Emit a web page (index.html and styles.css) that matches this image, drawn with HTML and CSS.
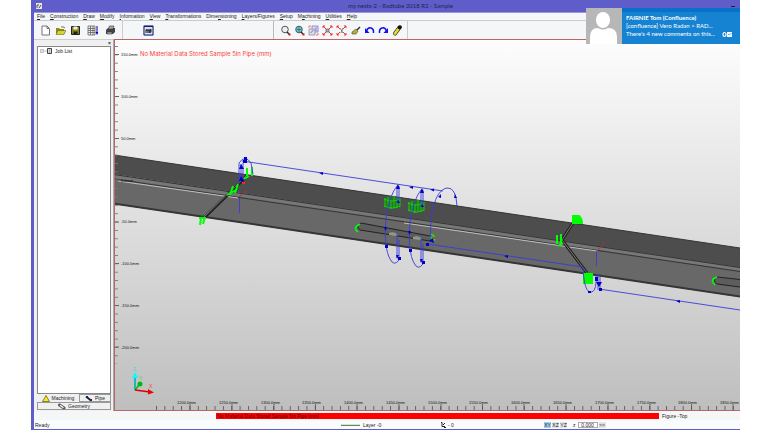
FILE: index.html
```html
<!DOCTYPE html>
<html lang="en">
<head>
<meta charset="utf-8">
<title>my nests-2 - Radtube 2018 R2 - Sample</title>
<link rel="stylesheet" href="styles.css">
</head>
<body>
<div class="app">
  <header class="titlebar">
    <svg class="app-icon" viewBox="0 0 6 6"><rect width="6" height="6" fill="#e8e8dc"/><path d="M1 5V2h2M3 5l2-3" stroke="#555" fill="none"/></svg>
    <span class="title">my nests-2 - Radtube 2018 R2 - Sample</span>
    <button class="minimize" aria-label="Minimize"></button>
  </header>
  <nav class="menu">
    <button><u>F</u>ile</button><button><u>C</u>onstruction</button><button><u>D</u>raw</button><button><u>M</u>odify</button><button><u>I</u>nformation</button><button><u>V</u>iew</button><button><u>T</u>ransformations</button><button>Dime<u>n</u>sioning</button><button><u>L</u>ayers/Figures</button><button><u>S</u>etup</button><button>M<u>a</u>chining</button><button><u>U</u>tilities</button><button><u>H</u>elp</button>
  </nav>
  <div class="toolbar">
    <div class="tools files">
      <button aria-label="New"><svg viewBox="0 0 11 11"><path d="M2 1h5l2.500 2.500V10H2zM7 1v2.500h2" fill="#fff" stroke="#555" stroke-width=".8"/></svg></button>
      <button aria-label="Open"><svg viewBox="0 0 11 11"><path d="M1 9V3h3l1 1h4v5z" fill="#8d8a18"/><path d="M1 9.500l2-4h8l-2 4z" fill="#d8d22a" stroke="#55551a" stroke-width=".5"/><path d="M6 2q2-1 4 1" stroke="#333" fill="none" stroke-width=".7"/></svg></button>
      <button aria-label="Save"><svg viewBox="0 0 11 11"><path d="M1.500 1.500h8v8h-8z" fill="#858719" stroke="#222"/><path d="M3.500 1.500h4v3h-4z" fill="#eee"/><path d="M3.500 6.500h4v3h-4z" fill="#222"/></svg></button>
    </div>
    <div class="tools output">
      <button aria-label="Report"><svg viewBox="0 0 11 11"><path d="M1 1h7v9H1zM1 3.500h7M1 5.500h7M1 7.500h7M3.500 1v9M6 1v9" fill="#eee" stroke="#555" stroke-width=".7"/><path d="M10 1v7" stroke="#00c"/><path d="M8.500 7h3L10 10z" fill="#00c"/></svg></button>
      <button aria-label="Print"><svg viewBox="0 0 11 11"><path d="M1 5l2-2h7v4L8 9H1z" fill="#444"/><path d="M3 4l1.500-3H9L8 4zM2 7h5v2H2z" fill="#aaa" stroke="#333" stroke-width=".6"/></svg></button>
    </div>
    <div class="tools preview">
      <button class="pressed" aria-label="Print preview"><svg viewBox="0 0 11 11"><path d="M1 1h9v9H1z" fill="#d9e2f4" stroke="#0d1e69"/><path d="M1 1h9v1H1z" fill="#0d1e69"/><path d="M2.500 5l1-1h5v3l-1 1h-5z" fill="#333"/><path d="M4 4h3M3 7h3" stroke="#ccc" stroke-width=".8"/></svg></button>
    </div>
    <div class="tools view">
      <button aria-label="Zoom"><svg viewBox="0 0 11 11"><circle cx="5" cy="4.500" r="3.300" fill="#eee" stroke="#555"/><path d="M7 7l2 2" stroke="#222" stroke-width="1.500"/><path d="M8.500 8.500h2v2h-2z" fill="#b22"/></svg></button>
      <button aria-label="Zoom extents"><svg viewBox="0 0 11 11"><circle cx="5" cy="4.500" r="3.300" fill="#6bd1cf" stroke="#555"/><path d="M5 2v5M2.500 4.500h5" stroke="#256a74" stroke-width=".8"/><path d="M7 7l2 2" stroke="#222" stroke-width="1.500"/><path d="M8.500 8.500h2v2h-2z" fill="#b22"/></svg></button>
      <button aria-label="Redraw"><svg viewBox="0 0 11 11"><path d="M4 1h6v6H4z" fill="#edf" stroke="#66b" stroke-width=".7"/><path d="M1 4h6v6H1z" fill="#dde" stroke="#888" stroke-width=".7"/><path d="M2.500 8l3-3" stroke="#77a"/><path d="M7 3h2M7 5h2" stroke="#36c" stroke-width=".7"/><path d="M1 3V1h2M10 8v2H8" stroke="#e77" fill="none"/></svg></button>
      <button aria-label="Trim"><svg viewBox="0 0 11 11"><path d="M1 1l3 3M10 1L7 4M1 10l3-3M10 10L7 7M1 3V1h2M8 1h2v2M1 8v2h2M8 10h2V8" stroke="#e33" fill="none"/><path d="M4 4h3v3H4z" fill="#aaa" stroke="#555" stroke-width=".6"/></svg></button>
      <button aria-label="Break"><svg viewBox="0 0 11 11"><path d="M1 1l3 3M10 1L7 4M1 10l3-3M10 10L7 7M1 3V1h2M8 1h2v2M1 8v2h2M8 10h2V8" stroke="#e33" fill="none"/><path d="M4 3l3 5M7 3L5 8" stroke="#666" stroke-width=".8"/></svg></button>
      <button aria-label="Sweep"><svg viewBox="0 0 11 11"><path d="M10 2L7 5" stroke="#333" stroke-width="1.500"/><path d="M2 7l4-3 2 2-2 3H2z" fill="#b6b02d" stroke="#444" stroke-width=".6"/></svg></button>
      <button aria-label="Undo"><svg viewBox="0 0 11 11"><path d="M2.500 6Q4 2 7 3q3 1 2.500 5" fill="none" stroke="#11e" stroke-width="1.500"/><path d="M1 3v5h4.500z" fill="#11e"/></svg></button>
      <button aria-label="Redo"><svg viewBox="0 0 11 11"><path d="M8.500 6Q7 2 4 3 1 4 1.500 8" fill="none" stroke="#11e" stroke-width="1.500"/><path d="M10 3v5H5.500z" fill="#11e"/></svg></button>
      <button aria-label="Erase"><svg viewBox="0 0 11 11"><path d="M3 8.500l4.500-6" stroke="#333" stroke-width="4" stroke-linecap="round"/><path d="M3 8.500L6 4.500" stroke="#e5dc24" stroke-width="2.800" stroke-linecap="round"/><path d="M7.500 2.500l.5-.5" stroke="#111" stroke-width="3.500" stroke-linecap="round"/></svg></button>
    </div>
  </div>
  <main class="work">
    <aside class="side">
      <div class="side-head"><button aria-label="Close panel">×</button></div>
      <div class="tree">
        <svg class="tree-icon" viewBox="0 0 14 8"><path d="M1.500 2.500h3v3h-3zM2 4h2M5 4h3" fill="#fff" stroke="#999" stroke-width=".6"/><path d="M8.500 1.500h4v5h-4z" fill="#ddd" stroke="#444"/><path d="M10 3h1M10 5h1" stroke="#555" stroke-width=".6"/></svg>
        <span>Job List</span>
      </div>
      <div class="tabs">
        <button class="tab active"><svg viewBox="0 0 8 7"><path d="M4 .5L7.500 6.500h-7z" fill="#fe0" stroke="#333" stroke-width=".6"/></svg>Machining</button>
        <button class="tab"><svg viewBox="0 0 8 7"><path d="M1 1.500l5 4" stroke="#223" stroke-width="2"/><path d="M1 1h2v2H1zM5 4h2v2H5z" fill="#226"/></svg>Pipe</button>
        <button class="tab wide"><svg viewBox="0 0 8 7"><path d="M1.500 2l4.500 3" stroke="#555" stroke-width="3" stroke-linecap="round"/><path d="M2 2.200l3.500 2.500" stroke="#fff" stroke-width="1.200"/></svg>Geometry</button>
      </div>
    </aside>
    <section class="canvas">
      <svg class="scene" viewBox="115 40 625 371" preserveAspectRatio="xMinYMin slice">
        <defs>
          <linearGradient id="sky" x1="0" y1="0" x2="0" y2="1"><stop offset="0" stop-color="#fdfdfd"/><stop offset="1" stop-color="#bebebe"/></linearGradient>
          <pattern id="vminor" x="114" y="46" width="6" height="8.360" patternUnits="userSpaceOnUse"><path d="M0 .5h4" stroke="#777" stroke-width=".9"/></pattern>
          <pattern id="hminor" x="156" y="404" width="8.360" height="7" patternUnits="userSpaceOnUse"><path d="M.5 2v5" stroke="#555" stroke-width=".9"/></pattern>
          <g id="loop">
            <path d="M398 185C384 200 382 245 390 259Q394 267 399 260M397 186v17M399 186v14M397 233v25M399 240v19"/>
            <path class="dot" d="M398 184l2 5h-4zM398 200l2 3h-3zM397 259l-1-4h3zM384 227h3l-1.500 4zM398 257h3v3h-3zM385 245h3v3h-3z"/>
          </g>
          <g id="drum">
            <path d="M384 198q8-4 16 0v9q-8 4-16 0z" fill="#2b7225"/>
            <path d="M385 198v9M388 197v11M391 200v9M394 196v12M397 198v10M400 198v9M384 199q8 4 16 0M384 206q8 4 16 0" fill="none" stroke="#10dd10" stroke-width=".8"/>
          </g>
        </defs>
        <rect x="115" y="40" width="625" height="371" fill="url(#sky)"/>
        <path d="M114 155L740 248V268L114 174z" fill="#4d4d4d"/>
        <path d="M114 174L740 267V297L114 204z" fill="#686868"/>
        <path d="M114 175L740 268V271L114 178z" fill="#777"/>
        <g fill="none" stroke="#353535">
          <path d="M114 155L740 248M114 174.500L740 267.500M114 179L740 271.500"/>
          <path d="M114 203.500L740 296.500" stroke-width="2"/>
        </g>
        <path d="M118 181L238 198M404 223L597 251" stroke="#ccc" stroke-width=".9"/>
        <path d="M204 218L248 175M573 223L562 240L587 273" fill="none" stroke="#222" stroke-width="3"/>
        <path d="M204 217L247 175M573 223L562 240L587 273" fill="none" stroke="#777" stroke-width="1"/>
        <path d="M430 236L361 223q-6 3-1 7l70 11M740 279.500L717 277q-5 4 0 7l23 3" fill="#5d5d5d" stroke="#222"/>
        <use href="#drum"/><use href="#drum" x="24" y="4"/>
        <path d="M389 233q4-2 9 1l-1 2q-5 0-8-1zM413 237q4-2 9 1l-1 2q-5 0-8-1z" fill="#8c9a8a"/>
        <g class="cut">
          <path d="M200 225l1-7M203 224l2-7M199 218h7M230 195l3-9M235 193l3-9M227 195l9-5M247 176v-8M252 176v-9M244 179l5-3M557 244v-9M561 244v-10M558 246l5-3"/>
          <path d="M573 223v-7h6q3 3 3 7zM584 283v-9h8v9z" class="cut-fill"/>
          <path d="M360 224q-8 4-2 8M717 277q-8 3-2 8M431 234l3 2-1 5M430 237l5 3" stroke-width="1.500"/>
        </g>
        <g class="path">
          <use href="#loop"/><use href="#loop" x="24" y="4"/>
          <path d="M239 183V163q6-9 12 0l2 11M241 181v-17M243 180v-17M242 161L443 191M431 242C429 218 434 190 447 188Q456 187 457 206M428 244L583 267Q584 294 592 292 597 290 596 275M598 274v16M600 276v14M599 289L740 310M239.500 198v15M596.500 251v15"/>
          <path class="dot" d="M239 169l2-5 3 5zM239 181l2-5 3 5zM243 160h4v3h-4zM244 157h3v3h-3zM319 173l4-1v3zM409 187l4-1v3zM430 189.500l4-1v3zM438 197l3-3v4zM455 194l2 4h-3zM426 243h3v3h-3zM429 241l4-3 1 5zM504 256l4-1v3zM588 291h3v2h-3zM596 282l3 5 3-5zM595 281v-4h3v4zM599 288h3v3h-3zM676 301l4-1v3z"/>
        </g>
        <path d="M239 197l8-7M597 251l8-9" stroke="#a33"/><path d="M242 182h3v2h-3zM433 237h2v2h-2z" fill="#f22"/>
        <rect x="114" y="46" width="6" height="318" fill="url(#vminor)"/>
        <path d="M114 54.500h5M114 96.500h5M114 138.500h5M114 180h5M114 222h5M114 263.500h5M114 305.500h5M114 347h5" stroke="#666"/>
        <rect x="156" y="404" width="584" height="7" fill="url(#hminor)"/>
        <path d="M190 404v7M232 404v7M274 404v7M315.500 404v7M357 404v7M399 404v7M441 404v7M482.500 404v7M524 404v7M566 404v7M608 404v7M650 404v7M691.500 404v7M733 404v7" stroke="#555" stroke-width=".8"/>
        <g class="scale">
          <text x="121" y="56">150.0mm</text><text x="121" y="98">100.0mm</text><text x="121" y="140">50.0mm</text><text x="121" y="182">0.0mm</text><text x="121" y="223">-50.0mm</text><text x="121" y="265">-100.0mm</text><text x="121" y="307">-150.0mm</text><text x="121" y="349">-200.0mm</text>
          <text x="177" y="404">1200.0mm</text><text x="219" y="404">1250.0mm</text><text x="261" y="404">1300.0mm</text><text x="302" y="404">1350.0mm</text><text x="344" y="404">1400.0mm</text><text x="386" y="404">1450.0mm</text><text x="428" y="404">1500.0mm</text><text x="469" y="404">1550.0mm</text><text x="511" y="404">1600.0mm</text><text x="553" y="404">1650.0mm</text><text x="595" y="404">1700.0mm</text><text x="637" y="404">1750.0mm</text><text x="678" y="404">1800.0mm</text><text x="720" y="404">1850.0mm</text>
        </g>
        <path d="M135 390V376" stroke="#1ab8c0" stroke-width="2"/><path d="M132 378l3-6 3 6z" fill="#0ff"/>
        <path d="M135 390l4-5" stroke="#0b0" stroke-width="1.500"/><circle cx="140" cy="384" r="2.500" fill="#0b1"/>
        <path d="M135 390l15 2" stroke="#d00" stroke-width="1.500"/><path d="M148 389l6 3.500-6 2z" fill="#e00"/>
        <g class="axis"><text x="133" y="371" fill="#3dd">Z</text><text x="139" y="380" fill="#3d3">Y</text><text x="149" y="388" fill="#e44">X</text></g>
        <text class="warning" x="140" y="56">No Material Data Stored Sample 5in Pipe (mm)</text>
      </svg>
    </section>
  </main>
  <footer>
    <div class="message-row"><span class="message">No Material Data Stored Sample 5in Pipe (mm)</span><span class="figure">Figure -Top</span></div>
    <div class="status">
      <span class="ready">Ready</span>
      <span class="layer"><i></i>Layer -0</span>
      <span class="tool"><svg viewBox="0 0 6 6"><path d="M1 .5h1v4h3M3 3l2-2M4 5.500h2" fill="none" stroke="#222"/></svg>- 0</span>
      <span class="planes"><button class="on">XY</button><button>XZ</button><button>YZ</button><label for="depth">z</label><input id="depth" value="0.000"><button>&gt;&gt;</button></span>
    </div>
  </footer>
  <div class="toast">
    <svg class="avatar" viewBox="0 0 36 36"><rect width="36" height="36" fill="#b7b7b7"/><ellipse cx="17" cy="12" rx="7" ry="8" fill="#fff"/><path d="M4 36v-7q0-9 8-9 5 3 10 0 9 0 9 9v7z" fill="#fff"/></svg>
    <div class="toast-body"><strong>FAIRNIE Tom (Confluence)</strong><span>[confluence] Vero Radan &gt; RAD...</span><span>There's 4 new comments on this...</span></div>
    <svg class="toast-logo" viewBox="0 0 10 7"><ellipse cx="2.500" cy="3.500" rx="1.500" ry="2" fill="none" stroke="#fff" stroke-width="1.200"/><path d="M5 1h5v5H5z" fill="#fff"/><path d="M6 3l1.500 1L9.500 2" stroke="#0873c4" fill="none" stroke-width=".7"/></svg>
  </div>
</div>
</body>
</html>
```
FILE: styles.css
```css
* { box-sizing: border-box; }
body { margin: 0; background: #fff; font: 5px/8px "Liberation Sans", Arial, sans-serif; color: #222; }
button, input { font: inherit; color: inherit; margin: 0; padding: 0; border: 0; background: none; white-space: nowrap; }
svg { display: block; }

.app { position: relative; display: flex; flex-direction: column; height: 100vh; margin: 0 30px 0 31px; background: #f4f6f8; border-left: 3px solid #5f5dca; border-bottom: 1px solid #5f5dca; overflow: hidden; }
.titlebar { display: flex; align-items: center; height: 13px; padding: 0 5px 0 2px; background: #5f5dca; border-bottom: 1px solid #9a98dc; }
.app-icon { width: 6px; height: 6px; }
.title { flex: 1; padding-left: 28px; text-align: center; font: 6px/12px Lato, sans-serif; color: #25254d; }
.minimize { width: 4px; height: 1px; background: #222; }

.menu { display: flex; gap: 5px; height: 8px; padding-left: 3px; border-bottom: 1px solid #c8cccf; }
.menu button { line-height: 7px; }

.toolbar { display: flex; height: 18px; background: #f5f6f8; }
.tools { display: flex; align-items: center; gap: 4px; }
.tools button { width: 11px; height: 11px; }
.files { padding-left: 6px; }
.output { gap: 7px; padding: 0 6px 0 6px; border-right: 1px solid #ccc; }
.preview { width: 151px; padding-left: 20px; border-right: 1px solid #bbb; }
.preview .pressed { background: #c9dcf5; }
.view { gap: 3px; padding: 0 4px 0 6px; border-right: 1px solid #ccc; }

.work { flex: 1; min-height: 0; display: flex; }
.side { display: flex; flex-direction: column; width: 80px; padding: 0 2px 0 3px; border-top: 1px solid #ccc; border-right: 1px solid #aaa; background: #f0f0f0; }
.side-head { display: flex; justify-content: flex-end; height: 6px; }
.side-head button { font-weight: bold; line-height: 6px; }
.tree { flex: 1; display: flex; align-items: flex-start; gap: 2px; padding-left: 1px; background: #fff; border: 1px solid #888; }
.tree-icon { width: 14px; height: 8px; }
.tabs { display: grid; grid-template-columns: 42px 1fr; grid-auto-rows: 8px; margin-bottom: 1px; }
.tab { display: flex; align-items: center; justify-content: center; gap: 2px; border: 1px solid #999; line-height: 6px; }
.tab svg { width: 8px; height: 7px; }
.tab.active { border: 0; }
.tab.wide { grid-column: span 2; }

.canvas { flex: 1; min-width: 0; border: 1px solid #bb6666; border-right: 0; overflow: hidden; }
.scene { width: 100%; height: 100%; }
.scale { font-size: 4px; fill: #111; }
.axis { font-size: 5px; }
.warning { font: 6px Inter, sans-serif; fill: #ff4040; }
.cut { fill: none; stroke: #0f0; stroke-width: 2; }
.cut-fill { fill: #0f0; }
.path { fill: none; stroke: #3b3bd8; stroke-width: .9; }
.dot { fill: #00c; stroke: none; }

.message-row { display: flex; align-items: center; height: 9px; padding-top: 1px; }
.message { flex: 1; height: 6px; margin-left: 182px; padding-left: 1px; background: #f00; color: #500; font-family: Lato, sans-serif; line-height: 6px; }
.figure { width: 81px; padding-left: 3px; }
.status { display: flex; align-items: center; height: 9px; background: #fafbfc; }
.ready { width: 307px; padding-left: 1px; }
.layer { display: flex; align-items: center; gap: 3px; width: 99px; }
.layer i { width: 19px; height: 2px; background: #bdf3b5; border-bottom: 1px solid #777; }
.tool { display: flex; align-items: center; gap: 2px; width: 104px; }
.tool svg { width: 6px; height: 6px; }
.planes { display: flex; align-items: center; gap: 1px; line-height: 6px; }
.planes button { width: 7px; height: 6px; background: #e3e3e3; line-height: 6px; }
.planes .on { background: #a4cdf2; }
.planes label { padding: 0 1px 0 5px; }
.planes input { width: 20px; height: 6px; border: 1px solid #aaa; background: #fff; text-align: center; line-height: 4px; }

.toast { position: absolute; top: 8px; right: 0; display: flex; width: 154px; height: 36px; background: #1683d2; border-top: 4px solid #0872ca; color: #fff; font: 6px/8px Lato, sans-serif; }
.avatar { flex: none; width: 36px; height: 36px; margin-top: -4px; }
.toast-body { display: flex; flex-direction: column; flex: 1; min-width: 0; padding: 2px 0 0 4px; white-space: nowrap; }
.toast-logo { flex: none; align-self: flex-end; width: 10px; height: 7px; margin: 0 8px 6px 0; }
```
